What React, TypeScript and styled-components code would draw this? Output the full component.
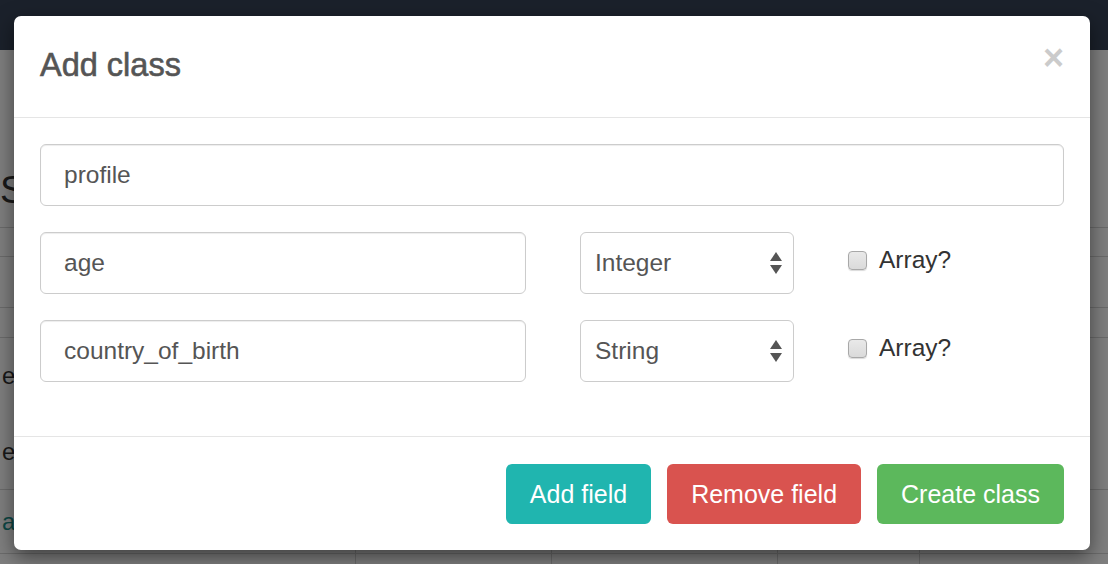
import React from 'react';
import styled, { createGlobalStyle } from 'styled-components';

const GlobalStyle = createGlobalStyle`
  html, body {
    margin: 0;
    padding: 0;
    width: 1108px;
    height: 564px;
    overflow: hidden;
    background: #ffffff;
    font-family: "Liberation Sans", Arial, sans-serif;
  }
  * { box-sizing: border-box; }
`;

/* ---------- page behind the modal ---------- */

const Page = styled.div`
  position: relative;
  width: 1108px;
  height: 564px;
  overflow: hidden;
  background: #ffffff;
  color: #333333;
`;

const Navbar = styled.div`
  height: 50px;
  background: #364256;
`;

const PageHeading = styled.h1`
  margin: 0;
  height: 178px;
  padding-top: 118px;
  font-size: 38px;
  font-weight: normal;
  line-height: 44px;
  color: #333;
  border-bottom: 1px solid #d6d6d6;
`;

const Band = styled.div<{ $h: number }>`
  height: ${(p) => p.$h}px;
  border-bottom: 1px solid #d6d6d6;
`;

const TableRow = styled.div<{ $h: number; $noBorder?: boolean }>`
  display: grid;
  grid-template-columns: 355px 196px 226px 142px 1fr;
  height: ${(p) => p.$h}px;
  border-bottom: ${(p) => (p.$noBorder ? 'none' : '1px solid #d6d6d6')};
  font-size: 24px;
`;

const Cell = styled.div<{ $link?: boolean }>`
  display: flex;
  align-items: center;
  padding: 0 2px;
  color: ${(p) => (p.$link ? '#1a8f8a' : '#333')};
  border-left: 1px solid #d6d6d6;
  &:first-child { border-left: none; }
  overflow: hidden;
  white-space: nowrap;
`;

/* ---------- modal ---------- */

const Backdrop = styled.div`
  position: absolute;
  inset: 0;
  background: rgba(0, 0, 0, 0.5);
  padding: 16px 18px 0 14px;
`;

const Modal = styled.div`
  width: 1076px;
  height: 534px;
  background: #ffffff;
  border-radius: 7px;
  box-shadow: 0 7px 20px rgba(0, 0, 0, 0.5);
  display: flex;
  flex-direction: column;
`;

const Header = styled.div`
  height: 102px;
  padding: 0 26px;
  display: flex;
  align-items: center;
  justify-content: space-between;
  border-bottom: 1px solid #e5e5e5;
`;

const Title = styled.h3`
  margin: 0;
  font-size: 32.5px;
  font-weight: 500;
  line-height: 1.1;
  color: #555555;
  -webkit-text-stroke: 0.6px #555555;
  margin-top: -1px;
`;

const CloseButton = styled.button`
  border: none;
  background: transparent;
  padding: 0;
  font-family: "Liberation Sans", Arial, sans-serif;
  font-size: 36px;
  font-weight: bold;
  line-height: 1;
  color: #000;
  opacity: 0.2;
  margin-top: -18px;
  cursor: pointer;
`;

const Body = styled.div`
  padding: 26px 26px 54px;
  display: flex;
  flex-direction: column;
  gap: 26px;
`;

const FieldRow = styled.div`
  display: grid;
  grid-template-columns: 486px 214px auto;
  column-gap: 54px;
  align-items: start;
`;

const TextInput = styled.div`
  height: 62px;
  display: flex;
  align-items: center;
  padding: 0 23px;
  border: 1px solid #cccccc;
  border-radius: 6px;
  box-shadow: inset 0 1px 1px rgba(0, 0, 0, 0.075);
  font-size: 24.5px;
  color: #555555;
  background: #fff;
`;

const SelectBox = styled.div`
  height: 62px;
  display: flex;
  align-items: center;
  justify-content: space-between;
  padding: 0 10px 0 14px;
  border: 1px solid #cccccc;
  border-radius: 6px;
  font-size: 24.5px;
  color: #555555;
  background: #fff;
`;

const CheckLabel = styled.label`
  display: flex;
  align-items: center;
  gap: 12px;
  margin-top: 14px;
  font-size: 24.5px;
  line-height: 28px;
  color: #333333;
`;

const CheckBox = styled.span`
  width: 19px;
  height: 19px;
  border: 1px solid #a8a8a8;
  border-radius: 4px;
  background: linear-gradient(#e9e9e9, #dadada);
  box-shadow: 0 1px 1px rgba(0, 0, 0, 0.15);
`;

const Footer = styled.div`
  border-top: 1px solid #e5e5e5;
  padding: 27px 26px 26px;
  display: flex;
  justify-content: flex-end;
  gap: 16px;
`;

const Button = styled.button<{ $bg: string }>`
  height: 60px;
  padding: 0 24px;
  border: none;
  border-radius: 6px;
  background: ${(p) => p.$bg};
  color: #ffffff;
  font-family: "Liberation Sans", Arial, sans-serif;
  font-size: 25px;
  white-space: nowrap;
  cursor: pointer;
`;

const Arrows = () => (
  <svg width="14" height="24" viewBox="0 0 14 24">
    <polygon points="7,1 13,10 1,10" fill="#555" />
    <polygon points="1,14 13,14 7,23" fill="#555" />
  </svg>
);

const fields = [
  { name: 'age', type: 'Integer' },
  { name: 'country_of_birth', type: 'String' },
];

const buttons = [
  { label: 'Add field', bg: '#20b5af' },
  { label: 'Remove field', bg: '#d9534f' },
  { label: 'Create class', bg: '#5cb85c' },
];

export default function App() {
  return (
    <>
      <GlobalStyle />
      <Page>
        <Navbar />
        <PageHeading>S</PageHeading>
        <Band $h={29} />
        <Band $h={51} />
        <Band $h={30} />
        <TableRow $h={76} $noBorder>
          <Cell>edit</Cell>
          <Cell />
          <Cell />
          <Cell />
          <Cell />
        </TableRow>
        <TableRow $h={76}>
          <Cell>edit</Cell>
          <Cell />
          <Cell />
          <Cell />
          <Cell>ping</Cell>
        </TableRow>
        <TableRow $h={64}>
          <Cell $link>a8f3</Cell>
          <Cell />
          <Cell />
          <Cell />
          <Cell />
        </TableRow>
        <TableRow $h={40}>
          <Cell />
          <Cell />
          <Cell />
          <Cell />
          <Cell />
        </TableRow>

        <Backdrop>
          <Modal>
            <Header>
              <Title>Add class</Title>
              <CloseButton aria-label="Close">×</CloseButton>
            </Header>
            <Body>
              <TextInput>profile</TextInput>
              {fields.map((f) => (
                <FieldRow key={f.name}>
                  <TextInput>{f.name}</TextInput>
                  <SelectBox>
                    <span>{f.type}</span>
                    <Arrows />
                  </SelectBox>
                  <CheckLabel>
                    <CheckBox />
                    Array?
                  </CheckLabel>
                </FieldRow>
              ))}
            </Body>
            <Footer>
              {buttons.map((b) => (
                <Button key={b.label} $bg={b.bg}>
                  {b.label}
                </Button>
              ))}
            </Footer>
          </Modal>
        </Backdrop>
      </Page>
    </>
  );
}
